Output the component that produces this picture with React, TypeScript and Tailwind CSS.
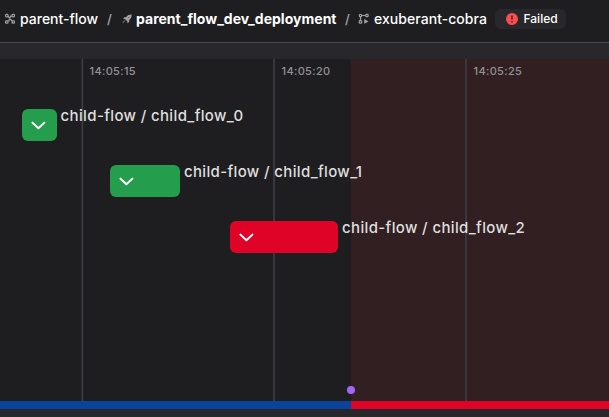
import type { ReactNode } from 'react';

const FlowIcon = () => (
  <svg className="h-3 w-3 shrink-0 text-[#a0a0a2]" viewBox="0 0 12 12" fill="none" stroke="currentColor" strokeWidth="1.2">
    <rect x="1.6" y="1.4" width="2.4" height="2.4" rx=".7" />
    <rect x="8" y="1.4" width="2.4" height="2.4" rx=".7" />
    <rect x="1.6" y="7.8" width="2.4" height="2.4" rx=".7" />
    <rect x="8" y="7.8" width="2.4" height="2.4" rx=".7" />
    <path d="M4 3.2 8 8M8 3.2H6.5L4.8 8H3.8" />
  </svg>
);

const RocketIcon = () => (
  <svg className="h-3 w-3 shrink-0 text-[#a0a0a2]" viewBox="0 0 12 12" fill="currentColor">
    <path d="M10.7 1.6C8.2 1.6 6.7 2.3 5.3 4L3.3 4.3 2.2 6l2 .2 2 2 .2 2 1.7-1.1.2-2.1c1.7-1.4 2.5-3 2.4-5.4Z" />
    <path d="M3.8 7.6 1.8 9.8" stroke="currentColor" />
    <circle cx="7.8" cy="4.5" r=".45" fill="#1e1e20" />
  </svg>
);

const RunIcon = () => (
  <svg className="h-3 w-3 shrink-0 text-[#a0a0a2]" viewBox="0 0 12 12" fill="none" stroke="currentColor" strokeWidth="1.2">
    <rect x="1.4" y="1.5" width="2.2" height="2.2" rx=".6" />
    <rect x="7.8" y="1.4" width="2.3" height="2.3" rx=".6" />
    <rect x="1.3" y="7.7" width="2.4" height="2.5" rx=".8" />
    <path d="M3.6 2.5h4.2M2.5 3.7v4" />
    <path d="M6.2 6v4.8L10.6 8.4Z" fill="currentColor" stroke="none" />
  </svg>
);

const Lines = () => (
  <svg className="pointer-events-none absolute inset-0 h-[342px] w-[609px]" viewBox="0 0 609 342">
    <rect x="351" y="0" width="258" height="342" fill="#321f22" />
    <path d="M82.4 0v342M274 0v342M466 0v342" stroke="#3d3c44" strokeWidth="1.7" />
  </svg>
);

const Run = ({ offset, bar, label }: { offset: string; bar: string; label: ReactNode }) => (
  <div className={`flex h-8 items-start ${offset}`}>
    <div className={`flex h-8 shrink-0 items-center rounded-[6px] pl-2 ${bar}`}>
      <svg className="h-4 w-4" viewBox="0 0 16 16" fill="none" stroke="white" strokeWidth="2" strokeLinecap="round" strokeLinejoin="round">
        <path d="m2.4 5.6 6 5.7 6-5.7" />
      </svg>
    </div>
    <span className="ml-1 -mt-[3px] whitespace-nowrap text-[15px] font-medium leading-5 tracking-[0.36px] text-[#dededf]">{label}</span>
  </div>
);

export default function App() {
  return (
    <main className="flex h-[417px] w-[609px] flex-col overflow-hidden bg-[#28272c] font-['Inter',sans-serif] text-white">
      <header className="flex h-[43px] shrink-0 items-center whitespace-nowrap border-b border-[#49494b] bg-[#1e1e20] pb-[4px] pl-[4px] text-sm font-medium">
        <FlowIcon />
        <span className="ml-1 w-[79px]">parent-flow</span>
        <span className="ml-2 w-[6px] text-[13px] text-[#a7a7a9]">/</span>
        <span className="ml-2 flex"><RocketIcon /></span>
        <span className="ml-[3px] w-[201px] font-bold tracking-[0.02px]">parent_flow_dev_deployment</span>
        <span className="ml-2 w-[6px] text-[13px] text-[#a7a7a9]">/</span>
        <span className="ml-[7px] flex"><RunIcon /></span>
        <span className="ml-1 w-[113px] tracking-[0.05px]">exuberant-cobra</span>
        <span className="ml-2 flex h-5 w-[71px] items-center rounded-[6px] bg-[#28272c] pl-[11px] text-xs">
          <svg className="h-3 w-3" viewBox="0 0 12 12"><circle cx="6" cy="6" r="6" fill="#fb4e4e" /><path d="M6 2.5v4M6 8v1.4" stroke="#462127" strokeWidth="1.5" /></svg>
          <span className="ml-[5.5px]">Failed</span>
        </span>
      </header>
      <div className="h-4 shrink-0" />
      <section className="relative h-[342px] shrink-0 overflow-hidden bg-[#1e1e20]">
        <Lines />
        <div className="relative flex h-[50px] pl-[89.5px] pt-[4px] text-[11px] font-medium leading-4 tracking-[0.35px] text-[#929294]">
          <span className="w-[192px]">14:05:15</span>
          <span className="w-[192px]">14:05:20</span>
          <span>14:05:25</span>
        </div>
        <div className="relative flex flex-col gap-6">
          <Run offset="pl-[22.4px]" bar="w-[34.2px] bg-[#249e4c]" label="child-flow / child_flow_0" />
          <Run offset="pl-[109.6px]" bar="w-[70.3px] bg-[#249e4c]" label="child-flow / child_flow_1" />
          <Run offset="pl-[230px]" bar="w-[108px] bg-[#df0427]" label="child-flow / child_flow_2" />
        </div>
        <i className="absolute left-[347px] top-[327px] h-2 w-2 rounded-full bg-[#a168f5]" />
      </section>
      <div className="flex h-2 shrink-0"><div className="w-[351px] bg-[#0a439b]" /><div className="flex-1 bg-[#df0427]" /></div>
    </main>
  );
}
